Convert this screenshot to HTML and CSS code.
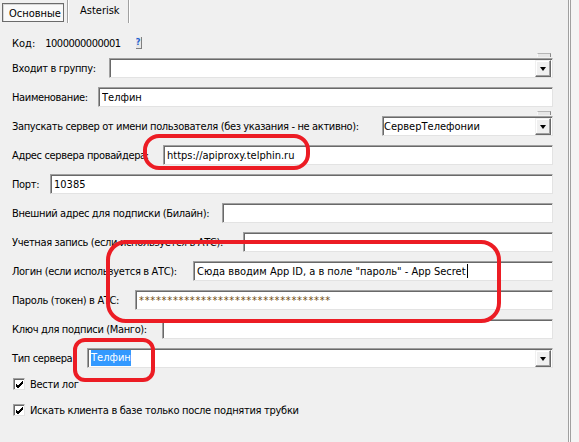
FILE: index.html
```html
<!DOCTYPE html>
<html lang="ru">
<head>
<meta charset="utf-8">
<title>Настройки сервера</title>
<link rel="stylesheet" href="styles.css">
</head>
<body>
<div class="window">
  <div class="content">
    <div class="tabs">
      <div class="tab tab-active"><span>Основные</span></div>
      <div class="tab-sep"></div>
      <div class="tab tab-plain">Asterisk</div>
      <div class="tab-sep"></div>
    </div>
    <div class="form">
      <div class="row-code">
        <span class="code-label">Код:</span>
        <span class="code-val">1000000000001</span>
        <span class="help-btn">?</span>
      </div>
      <div class="field lw-group">
        <span class="lbl">Входит в группу:</span>
        <div class="input combo has-tab"><span class="txt"></span><span class="combo-btn"></span></div>
      </div>
      <div class="field lw-name">
        <span class="lbl">Наименование:</span>
        <div class="input"><span class="txt">Телфин</span></div>
      </div>
      <div class="field lw-run">
        <span class="lbl">Запускать сервер от имени пользователя (без указания - не активно):</span>
        <div class="input combo has-tab"><span class="txt">СерверТелефонии</span><span class="combo-btn"></span></div>
      </div>
      <div class="field lw-addr">
        <span class="lbl">Адрес сервера провайдера:</span>
        <div class="input"><span class="txt">https://apiproxy.telphin.ru</span></div>
      </div>
      <div class="field lw-port">
        <span class="lbl">Порт:</span>
        <div class="input"><span class="txt">10385</span></div>
      </div>
      <div class="field lw-ext">
        <span class="lbl">Внешний адрес для подписки (Билайн):</span>
        <div class="input"><span class="txt"></span></div>
      </div>
      <div class="field lw-acct">
        <span class="lbl">Учетная запись (если используется в АТС):</span>
        <div class="input"><span class="txt"></span></div>
      </div>
      <div class="field lw-login">
        <span class="lbl">Логин (если используется в АТС):</span>
        <div class="input"><span class="txt">Сюда вводим App ID, а в поле "пароль" - App Secret<span class="caret"></span></span></div>
      </div>
      <div class="field lw-pass">
        <span class="lbl">Пароль (токен) в АТС:</span>
        <div class="input"><span class="txt pass">**********************************</span></div>
      </div>
      <div class="field lw-key">
        <span class="lbl">Ключ для подписи (Манго):</span>
        <div class="input"><span class="txt"></span></div>
      </div>
      <div class="field lw-type">
        <span class="lbl">Тип сервера:</span>
        <div class="input combo"><span class="txt"><span class="sel">Телфин</span></span><span class="combo-btn"></span></div>
      </div>
      <div class="check check-first">
        <span class="box"><svg width="9" height="9" viewBox="0 0 9 9"><path d="M1 4 L3 6 L8 1 M1 5 L3 7 L8 2 M1 6 L3 8 L8 3" fill="none" stroke="#000" stroke-width="1"/></svg></span>
        <span class="check-lbl">Вести лог</span>
      </div>
      <div class="check check-second">
        <span class="box"><svg width="9" height="9" viewBox="0 0 9 9"><path d="M1 4 L3 6 L8 1 M1 5 L3 7 L8 2 M1 6 L3 8 L8 3" fill="none" stroke="#000" stroke-width="1"/></svg></span>
        <span class="check-lbl">Искать клиента в базе только после поднятия трубки</span>
      </div>
    </div>
  </div>
  <div class="splitter"></div>
  <div class="side"></div>
  <div class="mark mark-addr"></div>
  <div class="mark mark-login"></div>
  <div class="mark mark-type"></div>
</div>
</body>
</html>
```
FILE: styles.css
```css
html, body {
  margin: 0;
  padding: 0;
}
body {
  background: #f0f0f0;
  font-family: "DejaVu Sans Condensed", "DejaVu Sans", Tahoma, sans-serif;
  font-size: 11px;
  color: #000;
}
.window {
  position: relative;
  display: flex;
  width: 579px;
  height: 442px;
  overflow: hidden;
}
.content {
  width: 568px;
  flex: none;
  box-sizing: border-box;
  padding-right: 15px;
}
.splitter {
  flex: none;
  width: 1px;
  border-left: 1px solid #a0a0a0;
  border-right: 1px solid #a0a0a0;
  background: #fbfbfb;
}
.side {
  flex: 1;
  background: #f4f4f4;
}

/* tabs */
.tabs {
  display: flex;
  height: 23px;
}
.tab {
  box-sizing: border-box;
  display: flex;
  align-items: center;
}
.tab-active {
  margin: 3px 0 1px 2px;
  width: 62px;
  height: 19px;
  border: 1px solid #6b6b6b;
  background: #f9f9f9;
  padding: 1px 0 0 6px;
  box-shadow: inset 1px 1px 0 #d6d6d6;
}
.tab-sep {
  width: 1px;
  height: 23px;
  background: #a0a0a0;
  border-right: 1px solid #ffffff;
}
.tab-active + .tab-sep {
  margin-left: 3px;
}
.tab-plain {
  width: 59px;
  padding: 0 0 2px 11px;
}

/* form */
.form {
  padding-left: 12px;
}
.row-code {
  display: flex;
  align-items: center;
  height: 14px;
  margin-top: 13px;
}
.code-val {
  margin-left: 10px;
  letter-spacing: -0.5px;
}
.help-btn {
  margin-left: 15px;
  width: 6px;
  height: 12px;
  box-sizing: border-box;
  background: #e8e8e8;
  border-right: 1px solid #808080;
  border-bottom: 1px solid #808080;
  color: #1f5fd0;
  font-weight: bold;
  font-size: 9px;
  line-height: 11px;
  text-align: center;
  overflow: hidden;
}
.field {
  display: flex;
  align-items: center;
  height: 20px;
  margin-top: 9px;
}
.row-code + .field {
  margin-top: 8px;
}
.lbl {
  flex: none;
  white-space: nowrap;
  overflow: visible;
  letter-spacing: -0.35px;
}
.check-lbl {
  letter-spacing: -0.3px;
}
.lw-group .lbl { width: 97px; }
.lw-name .lbl { width: 86px; }
.lw-run .lbl { width: 370px; }
.lw-addr .lbl { width: 151px; }
.lw-port .lbl { width: 38px; }
.lw-ext .lbl { width: 210px; }
.lw-acct .lbl { width: 231px; }
.lw-login .lbl { width: 181px; }
.lw-pass .lbl { width: 123px; }
.lw-key .lbl { width: 150px; }
.lw-type .lbl { width: 75px; }

.input {
  position: relative;
  flex: 1;
  min-width: 0;
  height: 20px;
  box-sizing: border-box;
  display: flex;
  align-items: center;
  background: #fff;
  border-top: 1px solid #a0a0a0;
  border-left: 1px solid #a0a0a0;
  border-right: 1px solid #e3e3e3;
  border-bottom: 1px solid #e3e3e3;
  box-shadow: inset 1px 1px 0 #696969;
  padding-left: 3px;
  white-space: nowrap;
}
.txt {
  flex: 1;
  overflow: hidden;
  display: flex;
  align-items: center;
}
.caret {
  display: inline-block;
  width: 1px;
  height: 14px;
  margin-left: 1px;
  background: #000;
}
.pass {
  color: #6e4a10;
  letter-spacing: 0.7px;
}
.sel {
  background: #3399ff;
  color: #fff;
  padding: 1px 0 2px;
}
.combo {
  padding-right: 1px;
}
.combo-btn {
  flex: none;
  position: relative;
  width: 16px;
  height: 17px;
  box-sizing: border-box;
  background: #f0f0f0;
  border-top: 1px solid #f0f0f0;
  border-left: 1px solid #f0f0f0;
  border-right: 1px solid #696969;
  border-bottom: 1px solid #696969;
  box-shadow: inset -1px -1px 0 #a0a0a0, inset 1px 1px 0 #fff;
}
.combo-btn::after {
  content: "";
  position: absolute;
  left: 4px;
  top: 6px;
  border-left: 3px solid transparent;
  border-right: 3px solid transparent;
  border-top: 4px solid #000;
}
.has-tab::before {
  content: "";
  position: absolute;
  right: 1px;
  top: -6px;
  width: 14px;
  height: 4px;
  box-sizing: border-box;
  background: #e6e6e6;
  border-top: 1px solid #b5b5b5;
  border-right: 1px solid #8a8a8a;
  border-left: 1px solid #f8f8f8;
}
.lw-run .input {
  flex: none;
  width: 171px;
  padding-left: 1px;
}

/* checkboxes */
.check {
  display: flex;
  align-items: center;
  height: 14px;
  margin-top: 9px;
  padding-left: 1px;
}
.check-second {
  margin-top: 12px;
}
.box {
  width: 12px;
  height: 12px;
  box-sizing: border-box;
  background: #fff;
  border-top: 1px solid #a0a0a0;
  border-left: 1px solid #a0a0a0;
  border-right: 1px solid #e3e3e3;
  border-bottom: 1px solid #e3e3e3;
  box-shadow: inset 1px 1px 0 #696969;
  display: flex;
  align-items: center;
  justify-content: center;
  padding: 1px 0 0 1px;
}
.check-lbl {
  margin-left: 5px;
}

/* red annotation marks */
.mark {
  position: absolute;
  box-sizing: border-box;
  border: 4px solid #ec1c24;
}
.mark-addr {
  left: 143px;
  top: 134px;
  width: 167px;
  height: 36px;
  border-radius: 16px;
}
.mark-login {
  left: 106px;
  top: 240px;
  width: 395px;
  height: 83px;
  border-radius: 20px;
}
.mark-type {
  left: 73px;
  top: 338px;
  width: 82px;
  height: 44px;
  border-radius: 12px;
}
```
